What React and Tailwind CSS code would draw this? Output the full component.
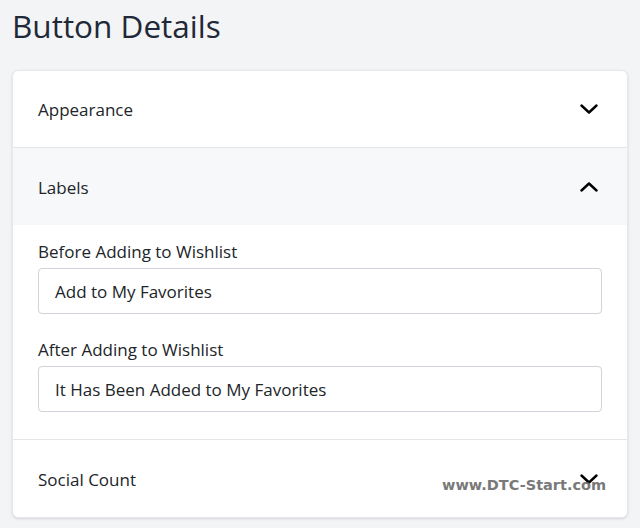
const font = { fontFamily: '"Open Sans", "Noto Sans", sans-serif' };

function Chevron({ up }) {
  return (
    <svg width="18" height="10" viewBox="0 0 18 10" fill="none" className="block">
      <polyline
        points={up ? '1.5,8.5 9,1.5 16.5,8.5' : '1.5,1.5 9,8.5 16.5,1.5'}
        stroke="#000"
        strokeWidth="2.4"
        strokeLinecap="round"
        strokeLinejoin="round"
      />
    </svg>
  );
}

function Row({ label, open, shaded, h, children }) {
  return (
    <div className="border-b border-[#e3e5e8] last:border-b-0">
      <div className={`${h} flex items-center justify-between pl-[25px] pr-[29px] ${shaded ? 'bg-[#f7f8fa]' : ''}`}>
        <span className="text-[17px] text-[#212529] pt-[2px]">{label}</span>
        <Chevron up={open} />
      </div>
      {children}
    </div>
  );
}

function Field({ label, value }) {
  return (
    <div className="flex flex-col">
      <label className="text-[17px] text-[#212529] mb-[4px] leading-[24px]">{label}</label>
      <div className="h-[46px] border border-[#ced4da] rounded-[4px] flex items-center px-[16px] pt-[2px] text-[17px] text-[#212529] bg-white">
        {value}
      </div>
    </div>
  );
}

export default function App() {
  return (
    <div className="w-[640px] h-[528px] bg-[#f3f4f6] px-[12px] pt-[4px] overflow-hidden relative" style={font}>
      <h1 className="text-[31.5px] text-[#1f2937] leading-[44px] mb-[22px]">Button Details</h1>
      <div className="bg-white rounded-[6px] border border-[#e5e7eb] shadow-sm">
        <Row label="Appearance" h="h-[76px]" />
        <Row label="Labels" open shaded h="h-[77px]">
          <div className="pl-[25px] pr-[25px] pt-[15px] pb-[27px] flex flex-col gap-[24px]">
            <Field label="Before Adding to Wishlist" value="Add to My Favorites" />
            <Field label="After Adding to Wishlist" value="It Has Been Added to My Favorites" />
          </div>
        </Row>
        <Row label="Social Count" h="h-[77px]" />
      </div>
      <div
        className="absolute left-[442px] top-[475px] text-[14.5px] font-bold text-[#6b6b6b] opacity-90"
        style={{ fontFamily: '"DejaVu Sans", sans-serif' }}
      >
        www.DTC-Start.com
      </div>
    </div>
  );
}
